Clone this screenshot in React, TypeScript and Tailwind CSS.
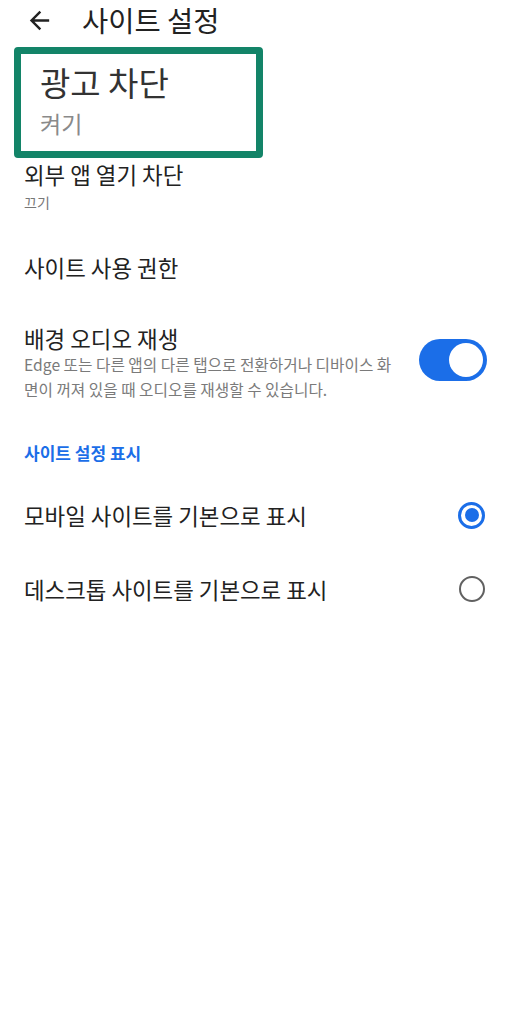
import { useState } from 'react';

const FONT = '"Noto Sans CJK KR", "Noto Sans", Roboto, sans-serif';

function BackArrow() {
  return (
    <svg width="29" height="29" viewBox="0 0 24 24" className="text-[#222]">
      <path fill="currentColor" d="M20 11H7.83l5.59-5.59L12 4l-8 8 8 8 1.41-1.41L7.83 13H20v-2z" />
    </svg>
  );
}

function Toggle({ on, onChange }: { on: boolean; onChange: () => void }) {
  return (
    <button
      onClick={onChange}
      className={`flex h-[42px] w-[68px] items-center rounded-full px-[4px] ${on ? 'justify-end bg-[#1b6ee8]' : 'justify-start bg-[#bdbdbd]'}`}
    >
      <span className="block h-[34px] w-[34px] rounded-full bg-white" />
    </button>
  );
}

function Radio({ checked }: { checked: boolean }) {
  return checked ? (
    <span className="flex h-[27px] w-[27px] items-center justify-center rounded-full border-[3px] border-[#1b6ee8]">
      <span className="block h-[14px] w-[14px] rounded-full bg-[#1b6ee8]" />
    </span>
  ) : (
    <span className="block h-[26px] w-[26px] rounded-full border-[2.5px] border-[#616161]" />
  );
}

export default function App() {
  const [audio, setAudio] = useState(true);
  const [mode, setMode] = useState<'mobile' | 'desktop'>('mobile');

  return (
    <div className="min-h-[1030px] w-[506px] bg-white text-[#222]" style={{ fontFamily: FONT }}>
      {/* Header */}
      <div className="flex h-[40px] items-center">
        <div className="ml-[25px] flex items-center">
          <BackArrow />
        </div>
        <h1 className="ml-[28px] text-[28.5px] leading-[36px] text-[#222]">사이트 설정</h1>
      </div>

      {/* Highlighted ad block item */}
      <div className="ml-[14px] mt-[7px] flex h-[111px] w-[249px] flex-col rounded-[4px] border-[7px] border-[#138468] pl-[19px] pt-[6px]">
        <div className="text-[33px] leading-[44px] text-[#333]">광고 차단</div>
        <div className="mt-[4px] text-[23px] leading-[30px] text-[#8a8a8a]">켜기</div>
      </div>

      <div className="pl-[24px] pr-[19px]">
        <div className="mt-[2px]">
          <div className="text-[22.4px] leading-[28px]">외부 앱 열기 차단</div>
          <div className="mt-[4px] text-[14px] leading-[20px] text-[#777]">끄기</div>
        </div>

        <div className="mt-[41px] text-[22.4px] leading-[28px]">사이트 사용 권한</div>

        <div className="mt-[43px] flex items-start justify-between">
          <div className="w-[380px]">
            <div className="text-[22.4px] leading-[28px]">배경 오디오 재생</div>
            <div className="text-[15.7px] leading-[25px] text-[#7a7a7a]">
              Edge 또는 다른 앱의 다른 탭으로 전환하거나 디바이스 화<br />
              면이 꺼져 있을 때 오디오를 재생할 수 있습니다.
            </div>
          </div>
          <div className="mt-[15px]">
            <Toggle on={audio} onChange={() => setAudio(!audio)} />
          </div>
        </div>

        <div className="mt-[40px] text-[17px] font-bold leading-[22px] text-[#1b6ee8]">사이트 설정 표시</div>

        <button
          onClick={() => setMode('mobile')}
          className="mt-[37px] flex w-full items-center justify-between text-left"
        >
          <span className="text-[22.4px] leading-[28px]">모바일 사이트를 기본으로 표시</span>
          <span className="mr-[2px]"><Radio checked={mode === 'mobile'} /></span>
        </button>

        <button
          onClick={() => setMode('desktop')}
          className="mt-[46px] flex w-full items-center justify-between text-left"
        >
          <span className="text-[22.4px] leading-[28px]">데스크톱 사이트를 기본으로 표시</span>
          <span className="mr-[2px]"><Radio checked={mode === 'desktop'} /></span>
        </button>
      </div>
    </div>
  );
}
